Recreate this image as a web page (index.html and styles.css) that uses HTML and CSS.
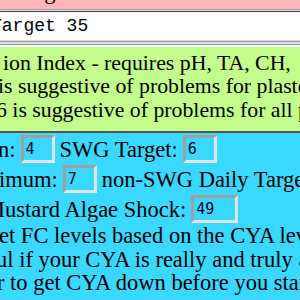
FILE: index.html
```html
<!DOCTYPE html>
<html lang="en">
<head>
  <meta charset="UTF-8" />
  <meta name="viewport" content="width=device-width, initial-scale=1.0">
  <title>Pool Calculator</title>
  <link rel="stylesheet" href="styles.css">
</head>
<body>

  <!-- CYA heading (scrolled up, only the descenders show) -->
  <div class="banner">
    <div class="banner-line"><span class="shift">CYA Target</span></div>
  </div>

  <!-- CYA entry -->
  <div class="entry">
    <div class="field"><span class="shift">Target 35</span></div>
  </div>
  <div class="rule"></div>

  <!-- CSI note -->
  <div class="note">
    <div class="line n1">ion Index - requires pH, TA, CH,</div>
    <div class="line n2">is suggestive of problems for plaster pools</div>
    <div class="line n3">6 is suggestive of problems for all pools</div>
  </div>

  <!-- FC levels -->
  <div class="panel">
    <div class="row">
      <span class="cut-n">n:</span>
      <div class="box">4</div>
      <span>SWG Target:</span>
      <div class="box">6</div>
    </div>
    <div class="row">
      <span class="cut-i">imum:</span>
      <div class="box">7</div>
      <span>non-SWG Daily Target:</span>
    </div>
    <div class="row">
      <span class="cut-m">Mustard Algae Shock:</span>
      <div class="box wide">49</div>
    </div>

    <div class="para">
      <div class="line p1">et FC levels based on the CYA level</div>
      <div class="line p2">ul if your CYA is really and truly above</div>
      <div class="line p3">r to get CYA down before you start</div>
    </div>
  </div>

</body>
</html>
```

FILE: styles.css
```css
html, body {
  margin: 0;
  height: 100%;
  overflow: hidden;
}

body {
  font-family: "Liberation Serif", "Times New Roman", serif;
  font-size: 22.5px;
  color: #000;
  background: #38d8ff;
}

/* pink heading */
.banner {
  height: 9px;
  overflow: hidden;
  background: #ffb6b6;
  border-bottom: 1px solid #999;
}

.banner-line {
  line-height: 23px;
  margin-top: -20px;
  white-space: nowrap;
}

.banner-line .shift {
  margin-left: -34px;
}

/* entry box */
.entry {
  border-top: 1px solid #e6e6e6;
}

.field {
  height: 28px;
  background: #fff;
  border-top: 1px solid #404040;
  border-bottom: 1px solid #dcdcdc;
  font-family: "Liberation Mono", "Courier New", monospace;
  font-size: 18px;
  line-height: 28px;
  white-space: nowrap;
  overflow: hidden;
}

.field .shift {
  margin-left: -9px;
}

.rule {
  height: 2px;
  background: #e0e0e0;
  border-top: 1px solid #999;
  border-bottom: 1px solid #999;
}

/* green note */
.note {
  background: #c4fc8c;
  border-top: 2px solid #fff;
  padding: 5px 0 9px;
  font-size: 21.8px;
  line-height: 23.4px;
}

.line {
  white-space: nowrap;
}

.n1 { margin-left: 3px; }
.n2 { margin-left: -2px; }
.n3 { margin-left: -4px; }

/* cyan panel */
.panel {
  background: #38d8ff;
  border-top: 2px solid #555;
  padding-top: 1px;
}

.row {
  display: flex;
  align-items: center;
  gap: 5px;
  height: 30px;
  line-height: 23.4px;
  white-space: nowrap;
}

.cut-n { margin-left: -2px; }
.cut-i { margin-left: -1px; }
.cut-m { margin-left: -15px; }

.box {
  box-sizing: border-box;
  flex: none;
  width: 34px;
  height: 28px;
  border: 3px solid;
  border-color: #a0a0a0 #e4e4e4 #e4e4e4 #a0a0a0;
  padding-left: 2px;
  font-family: "DejaVu Sans Mono", monospace;
  font-size: 15px;
  line-height: 22px;
  color: #002;
}

.box.wide {
  width: 47px;
}

.para {
  line-height: 23.4px;
}

.p1 { margin-left: -1px; }
.p2 { margin-left: -4px; }
.p3 { margin-left: -3px; }
```
